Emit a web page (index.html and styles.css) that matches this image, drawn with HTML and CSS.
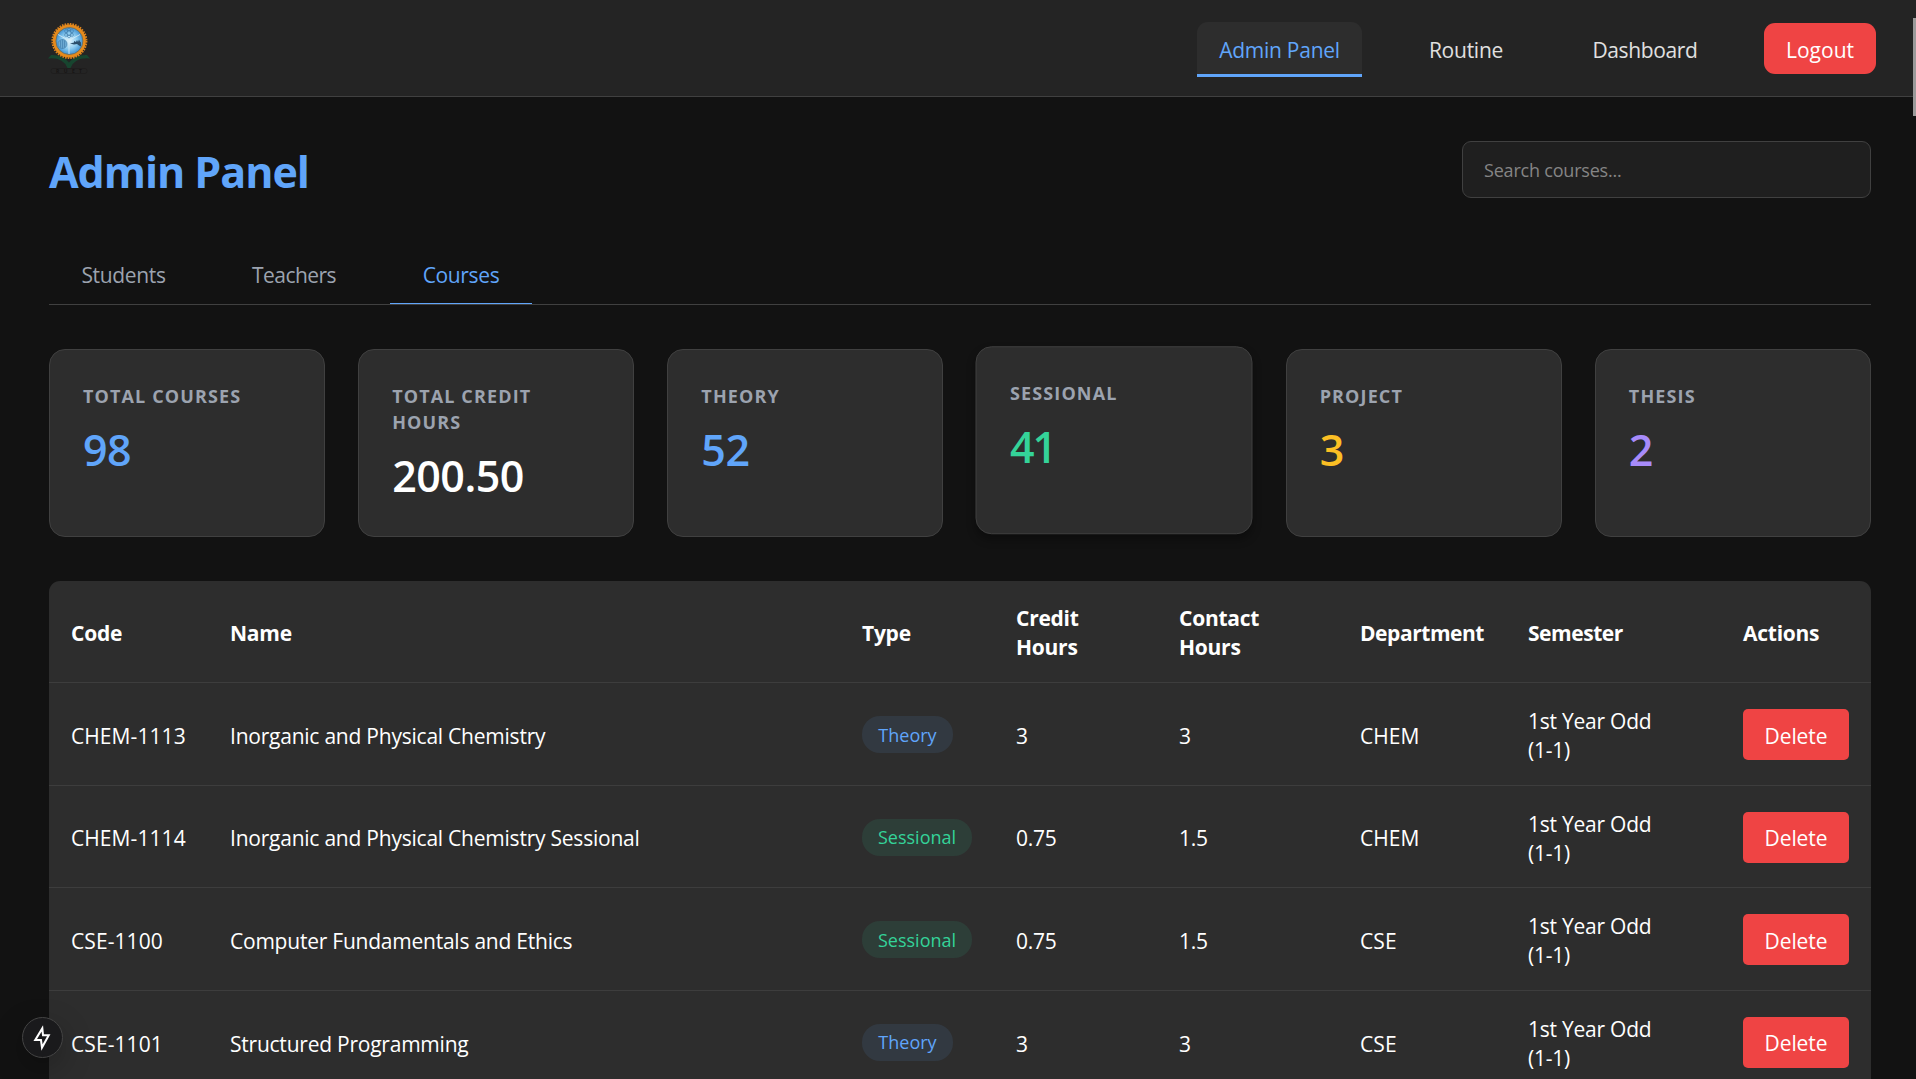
FILE: index.html
```html
<!DOCTYPE html>
<html lang="en">
<head>
<meta charset="utf-8">
<title>Admin Panel</title>
<link rel="stylesheet" href="styles.css">
</head>
<body>
<header class="topbar">
  <svg class="logo" viewBox="0 0 42 52" width="42" height="52">
    <defs>
      <radialGradient id="sky"><stop offset="0" stop-color="#e4f6fd"/><stop offset=".5" stop-color="#8fcdf0"/><stop offset="1" stop-color="#2b82c9"/></radialGradient>
    </defs>
    <path d="M0 36.500 3 33Q15 32.500 21 40.500Q27 32.500 39 33L42 36.500Q27 35 22.500 46H19.500Q15 35 0 36.500Z" fill="#17452f"/>
    <circle cx="21.400" cy="19" r="17" fill="none" stroke="#d9821f" stroke-width="2" stroke-dasharray="1.600 1.067"/>
    <circle cx="21.400" cy="19" r="15" fill="url(#sky)" stroke="#e58a1c" stroke-width="3"/>
    <circle cx="21.400" cy="19" r="13.500" fill="none" stroke="#6d6a55" stroke-width=".8"/>
    <path d="M21 18.500 10 12.500M21 18.500 32 12.500M21 18.500V32" stroke="#d9eef8" stroke-width=".8"/>
    <g fill="none" stroke="#3c78a8" stroke-width=".6"><ellipse cx="21" cy="11" rx="2" ry="5"/><ellipse cx="21" cy="11" rx="2" ry="5" transform="rotate(60 21 11)"/><ellipse cx="21" cy="11" rx="2" ry="5" transform="rotate(120 21 11)"/><circle cx="14.500" cy="22" r="4.500" fill="#6ba9d2"/><path d="M12.500 18.500v7M14.500 17.500v9M16.500 18.500v7"/></g>
    <path d="M22 21.500 26 20.500V19l2 1 1-2 1 2 1-2.500 1 2 1 1v4l-2-1-2-1.500-3 .5Z" fill="#2b4f6b"/>
    <rect x="3" y="46.500" width="36" height="5" rx="2" fill="none" stroke="#1e1c1c" stroke-width=".7"/>
    <text class="logo-text" x="21" y="51" text-anchor="middle" textLength="26">RUET</text>
  </svg>
  <nav class="nav">
    <a class="nav-link active">Admin Panel</a>
    <a class="nav-link routine">Routine</a>
    <a class="nav-link dashboard">Dashboard</a>
    <button class="logout">Logout</button>
  </nav>
</header>
<main class="page">
  <div class="page-head">
    <h1>Admin Panel</h1>
    <input class="search" type="text" placeholder="Search courses...">
  </div>
  <div class="tabs">
    <a class="tab students">Students</a>
    <a class="tab teachers">Teachers</a>
    <a class="tab courses selected">Courses</a>
  </div>
  <section class="stats">
    <div class="stat"><h3>Total Courses</h3><p class="blue">98</p></div>
    <div class="stat"><h3>Total Credit<br>Hours</h3><p>200.50</p></div>
    <div class="stat"><h3>Theory</h3><p class="blue">52</p></div>
    <div class="stat raised"><h3>Sessional</h3><p class="green">41</p></div>
    <div class="stat"><h3>Project</h3><p class="yellow">3</p></div>
    <div class="stat"><h3>Thesis</h3><p class="purple">2</p></div>
  </section>
  <table class="courses-table">
    <colgroup><col class="c-code"><col class="c-name"><col class="c-type"><col class="c-credit"><col class="c-contact"><col class="c-dept"><col class="c-sem"><col class="c-act"></colgroup>
    <thead>
      <tr><th>Code</th><th>Name</th><th>Type</th><th>Credit<br>Hours</th><th>Contact<br>Hours</th><th class="dept">Department</th><th>Semester</th><th>Actions</th></tr>
    </thead>
    <tbody>
      <tr><td class="code">CHEM-1113</td><td>Inorganic and Physical Chemistry</td><td class="control"><span class="badge theory">Theory</span></td><td>3</td><td>3</td><td class="code">CHEM</td><td>1st Year Odd<br>(1-1)</td><td class="control"><button class="delete">Delete</button></td></tr>
      <tr><td class="code">CHEM-1114</td><td>Inorganic and Physical Chemistry Sessional</td><td class="control"><span class="badge sessional">Sessional</span></td><td>0.75</td><td>1.5</td><td class="code">CHEM</td><td>1st Year Odd<br>(1-1)</td><td class="control"><button class="delete">Delete</button></td></tr>
      <tr><td class="code">CSE-1100</td><td>Computer Fundamentals and Ethics</td><td class="control"><span class="badge sessional">Sessional</span></td><td>0.75</td><td>1.5</td><td class="code">CSE</td><td>1st Year Odd<br>(1-1)</td><td class="control"><button class="delete">Delete</button></td></tr>
      <tr><td class="code">CSE-1101</td><td>Structured Programming</td><td class="control"><span class="badge theory">Theory</span></td><td>3</td><td>3</td><td class="code">CSE</td><td>1st Year Odd<br>(1-1)</td><td class="control"><button class="delete">Delete</button></td></tr>
    </tbody>
  </table>
</main>
<div class="dev-badge">
  <svg viewBox="0 0 16 16" width="27" height="27" fill="none" stroke="#fff" stroke-width="1.200" stroke-linejoin="miter"><path d="M7.900 2.600 3.700 9.500H7.100L7.700 13.900 11.700 6.600H8.300Z"/></svg>
</div>
<div class="scroll-thumb"></div>
</body>
</html>
```
FILE: styles.css
```css
* { box-sizing: border-box; }
html, body { height: 100%; margin: 0; overflow: hidden; }
body {
  background: #121212;
  color: #fff;
  font-family: "Open Sans", "Noto Sans", sans-serif;
  font-size: 21px;
  line-height: 29px;
}
button, input { font: inherit; letter-spacing: inherit; border: 0; margin: 0; }

.topbar {
  height: 97px;
  padding: 0 40px 0 48px;
  display: flex;
  justify-content: space-between;
  align-items: flex-start;
  background: #242424;
  border-bottom: 1px solid #404040;
}
.logo { margin-top: 22px; }
.logo-text { font-size: 5px; font-weight: 700; line-height: 1; fill: #171515; }
.nav { display: flex; align-items: flex-start; padding-top: 22px; letter-spacing: -.25px; }
.nav-link {
  height: 55px;
  padding: 14px 0 0;
  margin-right: 44px;
  text-align: center;
  color: #e0e0e0;
  border-radius: 11px;
}
.nav-link.routine { width: 120px; }
.nav-link.dashboard { width: 150px; letter-spacing: -.35px; }
.nav-link.active {
  width: 165px;
  color: #60a5fa;
  background: linear-gradient(#60a5fa, #60a5fa) 0 100% / 100% 3px no-repeat, #2d2d2d;
  border-radius: 11px 11px 0 0;
}
.logout {
  width: 112px;
  height: 51px;
  margin-top: 1px;
  padding: 4px 0 0;
  border-radius: 11px;
  background: #ef4444;
  color: #fff;
  letter-spacing: 0;
}

.page { padding: 44px 45px 0 49px; }
.page-head { display: flex; justify-content: space-between; height: 104px; }
h1 {
  margin: 2px 0 0;
  font-size: 43px;
  line-height: 58px;
  font-weight: 700;
  letter-spacing: -1.050px;
  color: #60a5fa;
}
.search {
  width: 409px;
  height: 57px;
  padding: 0 22px 0 21px;
  border: 1px solid #404040;
  border-radius: 9px;
  background: #1f1f1f;
  color: #fff;
  font-size: 18px;
  letter-spacing: -.2px;
}
.search::placeholder { color: #858585; opacity: 1; }

.tabs { display: flex; gap: 22px; height: 60px; border-bottom: 1px solid #404040; letter-spacing: -.35px; }
.tab { height: 59px; padding-top: 16px; text-align: center; color: #9ca3af; }
.tab.students { width: 149px; }
.tab.teachers { width: 148px; letter-spacing: -.550px; }
.tab.courses { width: 142px; }
.tab.selected { color: #60a5fa; border-bottom: 1px solid #60a5fa; }

.stats {
  display: grid;
  grid-template-columns: repeat(6, 1fr);
  gap: 33px;
  margin-top: 44px;
}
.stat {
  height: 188px;
  padding: 33px 30px 0 33px;
  background: #2d2d2d;
  border: 1px solid #404040;
  border-radius: 16px;
}
.stat.raised { transform: translate(-.5px, -2.750px); box-shadow: 0 5px 8px rgba(0,0,0,.3); }
.stat h3 {
  margin: 0 0 12px;
  font-size: 18px;
  line-height: 26px;
  font-weight: 700;
  letter-spacing: 1.130px;
  text-transform: uppercase;
  color: #9ca3af;
}
.stat p { margin: 0; font-size: 43px; line-height: 58px; font-weight: 600; letter-spacing: -.5px; }
.stat .blue { color: #60a5fa; }
.stat .green { color: #34d399; letter-spacing: -2px; }
.stat .yellow { color: #fbbf24; }
.stat .purple { color: #a78bfa; }

.courses-table {
  width: 1822px;
  margin-top: 44px;
  table-layout: fixed;
  border-collapse: separate;
  border-spacing: 0;
  background: #2d2d2d;
  border-radius: 11px 11px 0 0;
}
.c-code { width: 159px; }
.c-name { width: 632px; }
.c-type { width: 154px; }
.c-credit { width: 163px; }
.c-contact { width: 181px; }
.c-dept { width: 168px; }
.c-sem { width: 215px; }
.c-act { width: 150px; }
thead tr { height: 102px; }
tbody tr { height: 102.660px; }
th, td {
  padding: 4.600px 0 0 22px;
  text-align: left;
  vertical-align: middle;
  border-bottom: 1px solid #3d3d3d;
  white-space: nowrap;
  letter-spacing: -.230px;
}
th { padding-top: 3px; font-weight: 700; letter-spacing: -.250px; }
th.dept, th.dept + th { letter-spacing: -.450px; }
.code { letter-spacing: .080px; }
.control { padding-top: 1.400px; letter-spacing: 0; }
.badge {
  display: inline-flex;
  align-items: center;
  justify-content: center;
  height: 37px;
  padding-top: 1px;
  border-radius: 18px;
  font-size: 18px;
  vertical-align: middle;
}
.theory { width: 91px; color: #60a5fa; background: rgba(96,165,250,.1); }
.sessional { width: 110px; color: #34d399; background: rgba(52,211,153,.1); }
.delete {
  display: block;
  width: 106px;
  height: 51px;
  padding: 3px 0 0;
  border-radius: 5px;
  background: #ef4444;
  color: #fff;
  letter-spacing: -.1px;
}

.dev-badge {
  position: fixed;
  left: 22px;
  top: 1017px;
  width: 41px;
  height: 41px;
  display: flex;
  align-items: center;
  justify-content: center;
  border-radius: 50%;
  background: #1a1a1c;
  border: 1px solid #444;
  box-shadow: 0 10px 30px rgba(0,0,0,.25);
}
.scroll-thumb {
  position: fixed;
  right: 0;
  top: 18px;
  width: 3px;
  height: 98px;
  background: #9a9a9a;
}
```
